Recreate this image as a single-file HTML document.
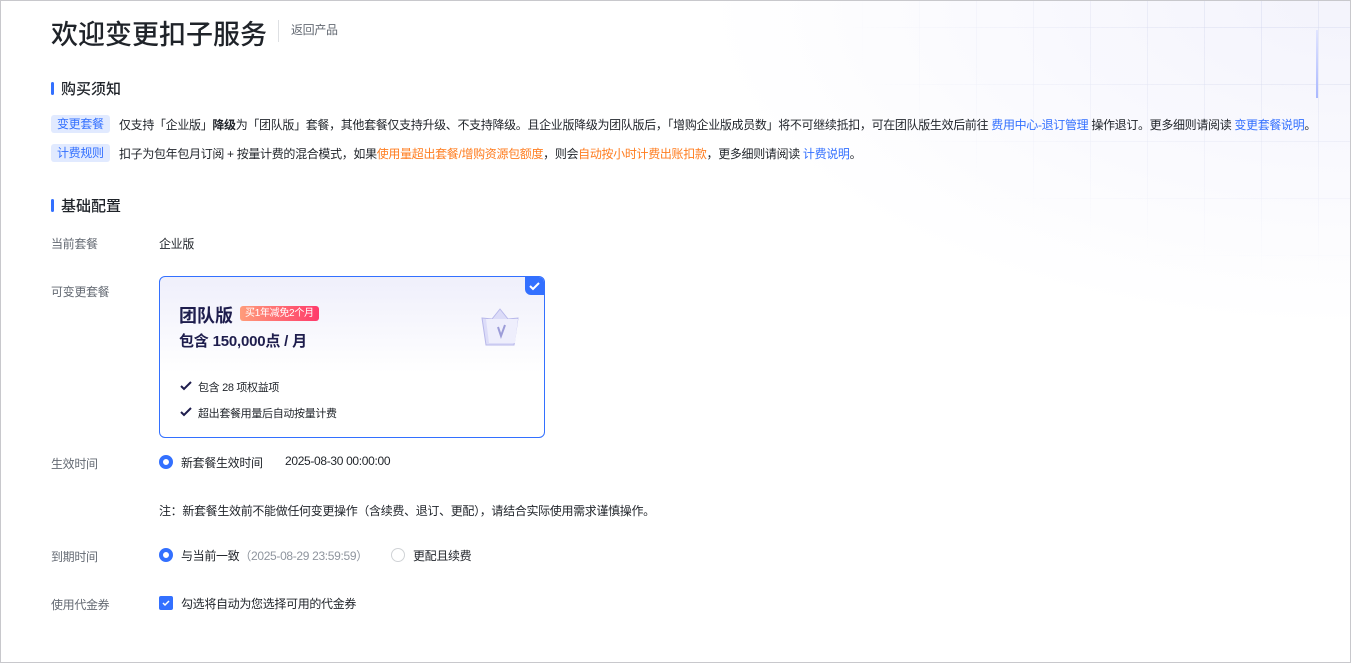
<!DOCTYPE html>
<html><head><meta charset="utf-8"><style>
*{margin:0;padding:0;box-sizing:border-box}
body{width:1351px;height:663px;overflow:hidden;background:#fff;font-family:"Liberation Sans","Noto Sans CJK SC",sans-serif;color:#1f2329;position:relative;font-size:12px;letter-spacing:-0.33px}
.frame{position:absolute;inset:0;border:1px solid #c8c8cc;pointer-events:none;z-index:10}
.grid{position:absolute;left:0;top:0;width:1351px;height:330px;
background-image:linear-gradient(to right,rgba(205,210,235,.35) 1px,transparent 1px),linear-gradient(to bottom,rgba(205,210,235,.35) 1px,transparent 1px);
background-size:57px 57px;background-position:1033px 27px;
-webkit-mask-image:radial-gradient(ellipse 520px 280px at 1351px 0,#000 25%,transparent 100%);
mask-image:radial-gradient(ellipse 520px 280px at 1351px 0,#000 25%,transparent 100%)}
.glow{position:absolute;left:700px;top:0;width:651px;height:330px;background:radial-gradient(ellipse at 100% 0,rgba(242,242,252,.9),rgba(255,255,255,0) 70%)}
.abs{position:absolute;white-space:nowrap}
h1{position:absolute;left:51px;top:13px;font-size:27px;font-weight:500;color:#1f2329;letter-spacing:0}
.sep{position:absolute;left:278px;top:20px;width:1px;height:22px;background:#dee0e3}
.back{left:291px;top:21px;color:#646a73;font-size:12px}
.sec{position:absolute;left:51px;font-size:15px;font-weight:500;letter-spacing:0}
.sec:before{content:"";position:absolute;left:0;top:4px;width:3px;height:13px;background:#3370ff;border-radius:2px}
.sec span{padding-left:10px}
.tag{position:absolute;left:51px;height:18px;padding:0 6px;background:#e1eaff;color:#3370ff;border-radius:3px;font-size:12px;line-height:18px}
.blue{color:#3370ff}.orange{color:#ff7d20}
.lbl{left:51px;color:#646a73}
.card{position:absolute;left:159px;top:276px;width:386px;height:162px;border:1px solid #3370ff;border-radius:6px;background:linear-gradient(180deg,#efeffb 0%,#fbfbfe 45%,#fff 60%);overflow:hidden}
.corner{position:absolute;right:0;top:0;width:19px;height:18px;background:#3370ff;border-bottom-left-radius:6px}
.radio{position:absolute;width:14px;height:14px;border-radius:50%;border:4px solid #3370ff;background:#fff}
.radio.off{border:1px solid #d0d3d6}
</style></head><body>
<div class="glow"></div><div class="grid"></div>
<div class="abs" style="left:1316px;top:30px;width:2px;height:68px;background:linear-gradient(#e0e4ff,#aab8ff)"></div>
<h1>欢迎变更扣子服务</h1><div class="sep"></div><div class="abs back">返回产品</div>
<div class="sec" style="top:78px"><span>购买须知</span></div>
<div class="tag" style="top:115px">变更套餐</div>
<div class="abs" style="left:119px;top:116px">仅支持「企业版」<b>降级</b>为「团队版」套餐，其他套餐仅支持升级、不支持降级。且企业版降级为团队版后，「增购企业版成员数」将不可继续抵扣，可在团队版生效后前往 <span class="blue">费用中心-退订管理</span> 操作退订。更多细则请阅读 <span class="blue">变更套餐说明</span>。</div>
<div class="tag" style="top:144px">计费规则</div>
<div class="abs" style="left:119px;top:145px">扣子为包年包月订阅 + 按量计费的混合模式，如果<span class="orange">使用量超出套餐/增购资源包额度</span>，则会<span class="orange">自动按小时计费出账扣款</span>，更多细则请阅读 <span class="blue">计费说明</span>。</div>
<div class="sec" style="top:195px"><span>基础配置</span></div>
<div class="abs lbl" style="top:235px">当前套餐</div><div class="abs" style="left:159px;top:235px">企业版</div>
<div class="abs lbl" style="top:283px">可变更套餐</div>
<div class="card">
 <div class="corner"><svg width="19" height="18" viewBox="0 0 19 18"><path d="M5 9l3 3 6-6" stroke="#fff" stroke-width="2" fill="none"/></svg></div>
 <div class="abs" style="left:19px;top:25px;font-size:18px;font-weight:700;color:#1e1d4d;letter-spacing:0">团队版</div>
 <div class="abs" style="left:80px;top:29px;height:15px;padding:0 5px;font-size:10px;line-height:15px;color:#fff;border-radius:3px;background:linear-gradient(90deg,#ff9c7a,#ff3b6b);letter-spacing:-0.3px">买1年减免2个月</div>
 <div class="abs" style="left:19px;top:53px;font-size:15px;font-weight:700;color:#1e1d4d;letter-spacing:-0.2px">包含 150,000点 / 月</div>
 <svg class="abs" style="left:316px;top:28px" width="50" height="50" viewBox="0 0 50 50"><path d="M6 13l10 1 8-10 8 10 10-1-4 27H10z" fill="#dcdcf8" stroke="#b8b8ea"/><path d="M10 14h32l-3 24H13z" fill="#eeeefc"/><path d="M22 22l3 9 4-11" stroke="#9c9cd8" stroke-width="2" fill="none"/></svg>
 <svg class="abs" style="left:20px;top:104px" width="12" height="10"><path d="M1 5l3 3 7-7" stroke="#1e1d4d" stroke-width="2" fill="none"/></svg>
 <div class="abs" style="left:38px;top:102px;font-size:11px">包含 28 项权益项</div>
 <svg class="abs" style="left:20px;top:130px" width="12" height="10"><path d="M1 5l3 3 7-7" stroke="#1e1d4d" stroke-width="2" fill="none"/></svg>
 <div class="abs" style="left:38px;top:128px;font-size:11px">超出套餐用量后自动按量计费</div>
</div>
<div class="abs lbl" style="top:455px">生效时间</div>
<div class="radio" style="left:159px;top:455px"></div>
<div class="abs" style="left:181px;top:454px">新套餐生效时间</div>
<div class="abs" style="left:285px;top:454px">2025-08-30 00:00:00</div>
<div class="abs" style="left:159px;top:502px">注：新套餐生效前不能做任何变更操作（含续费、退订、更配），请结合实际使用需求谨慎操作。</div>
<div class="abs lbl" style="top:548px">到期时间</div>
<div class="radio" style="left:159px;top:548px"></div>
<div class="abs" style="left:181px;top:547px">与当前一致<span style="color:#8f959e">（2025-08-29 23:59:59）</span></div>
<div class="radio off" style="left:391px;top:548px"></div>
<div class="abs" style="left:413px;top:547px">更配且续费</div>
<div class="abs lbl" style="top:596px">使用代金券</div>
<div class="abs" style="left:159px;top:596px;width:14px;height:14px;background:#3370ff;border-radius:2px"><svg width="14" height="14"><path d="M4 7l2 2 4-4" stroke="#fff" stroke-width="1.5" fill="none"/></svg></div>
<div class="abs" style="left:181px;top:595px">勾选将自动为您选择可用的代金券</div>
<div class="frame"></div>
</body></html>
